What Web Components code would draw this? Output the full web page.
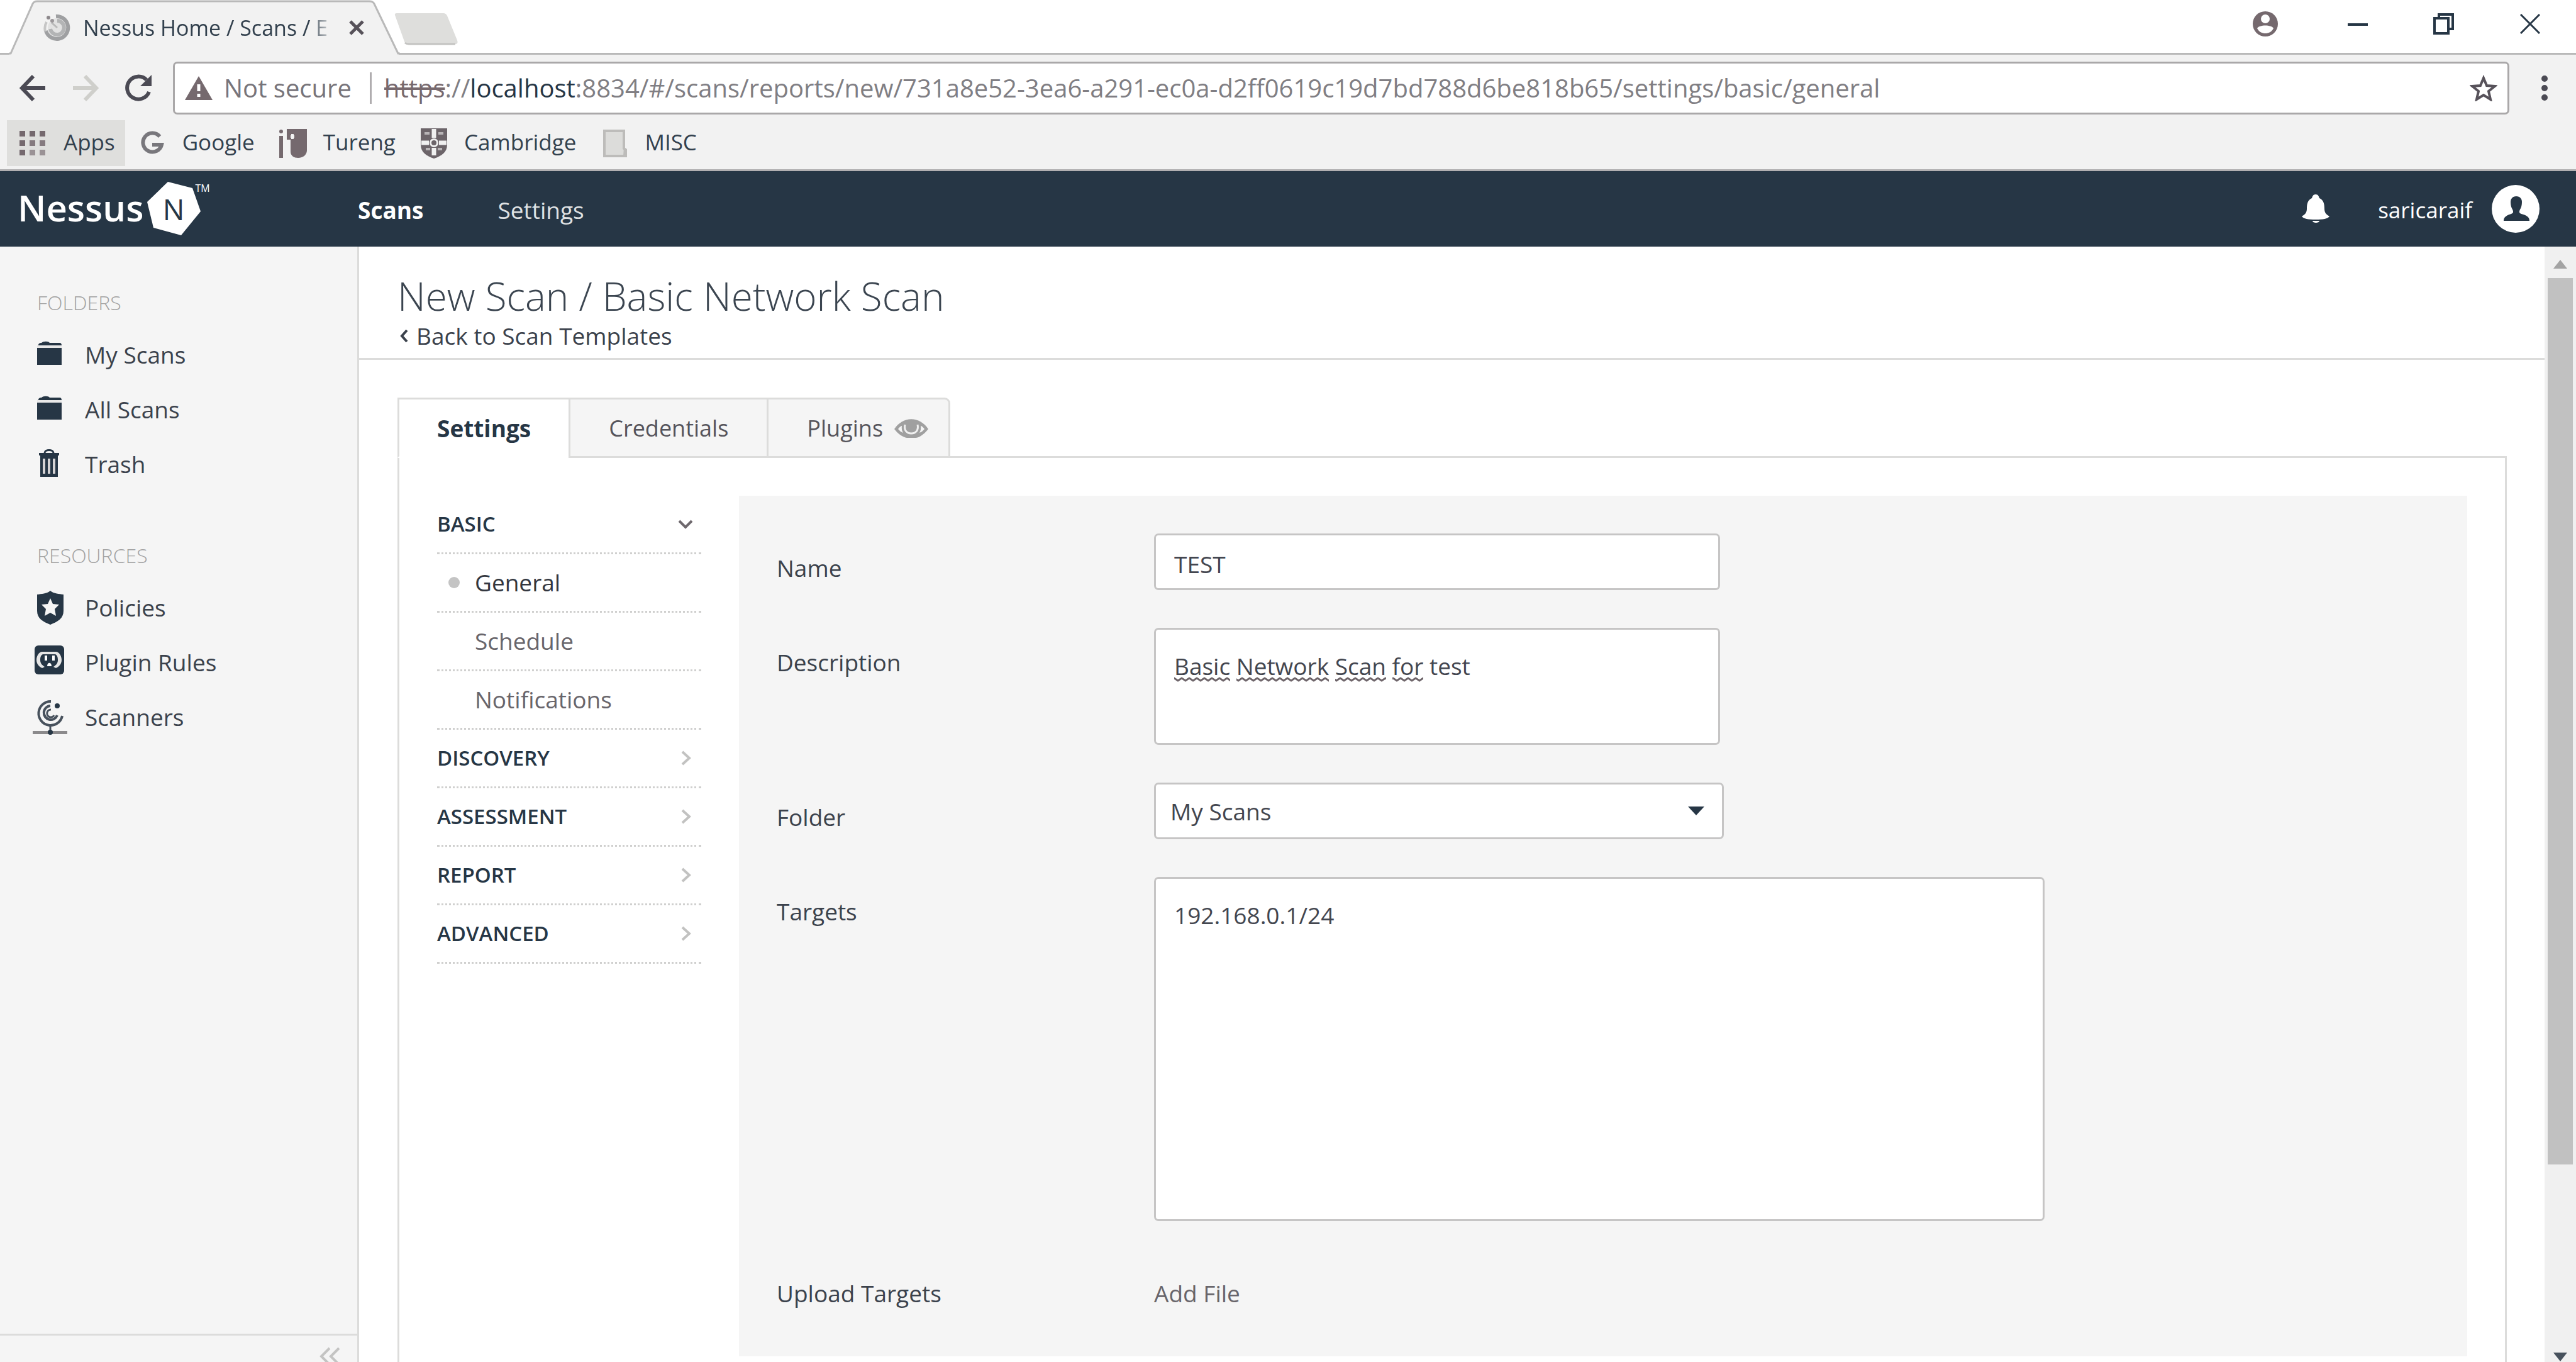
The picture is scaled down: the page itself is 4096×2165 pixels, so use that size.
<!DOCTYPE html>
<html lang="en">
<head>
<meta charset="utf-8">
<title>Nessus Home / Scans / Editor</title>
<style>
  :root {
    --ink: #263645;
    --text: #3b424c;
    --muted: #68656b;
    --line: #dcdcdb;
    --chrome: #f2f2f2;
    --panel: #f5f5f5;
  }
  html, body { margin: 0; height: 100%; overflow: hidden; background: #fff; }
  body { font: 37px/54px "Open Sans", "Noto Sans", sans-serif; color: var(--text); }
</style>
</head>
<body>
<nessus-window></nessus-window>

<script>
const RESET = `
  *, *::before, *::after { box-sizing: border-box; }
  button, input, textarea, select { font: inherit; color: inherit; margin: 0; }
  button { border: 0; background: none; padding: 0; cursor: pointer; }
  a { color: inherit; text-decoration: none; }
  svg { display: block; }
`;

function define(name, css, html) {
  customElements.define(name, class extends HTMLElement {
    constructor() {
      super();
      this.attachShadow({ mode: 'open' });
    }
    connectedCallback() {
      if (this.shadowRoot.childNodes.length) return;
      const markup = typeof html === 'function' ? html(this) : html;
      const tpl = document.createElement('template');
      tpl.innerHTML = `<style>${RESET}${css}</style>${markup}`;
      this.shadowRoot.append(tpl.content.cloneNode(true));
    }
  });
}

/* name: [width, height, drawing] */
const ICONS = {
  favicon: [44, 44, `
    <circle cx="23" cy="22" r="15" fill="#e2e2e2"/>
    <path d="M21 4A18 18 0 1 1 5 27" fill="none" stroke="#9fa0a2" stroke-width="6"/>
    <path d="M23 11a11 11 0 1 1-11 13" fill="none" stroke="#b3b4b5" stroke-width="6"/>
    <path d="M4 28Q2 20 6 13" fill="none" stroke="#c6c6c6" stroke-width="4"/>
    <path d="M14 14l9 8" stroke="#b9b9b9" stroke-width="3"/>
    <circle cx="9" cy="6" r="3" fill="#8d888b"/><circle cx="15" cy="11" r="3" fill="#9b979a"/>`],
  'tab-close': [26, 26, `<path d="M3 3l20 20M23 3L3 23" stroke="#57525a" stroke-width="5"/>`],
  back: [42, 44, `<path d="M41 22H5M22 3L4 22l18 19" fill="none" stroke="#4b4a54" stroke-width="6"/>`],
  forward: [42, 44, `<path d="M1 22h36M20 3l18 19-18 19" fill="none" stroke="#cfcfcb" stroke-width="6"/>`],
  reload: [44, 44, `<path d="M38 28A18 18 0 1 1 34 9" fill="none" stroke="#4b4a54" stroke-width="6"/><path d="M42 1v18H24z" fill="#4b4a54"/>`],
  warning: [44, 38, `<path d="M22 0l22 38H0z" fill="#75696e"/><path d="M22 13v11M22 28v5" stroke="#fff" stroke-width="5"/>`],
  star: [44, 42, `<path d="M22 5l5 12 13 1-10 8 3 13-11-7-11 7 3-13-10-8 13-1z" fill="none" stroke="#57525a" stroke-width="4"/>`],
  kebab: [12, 42, `<g fill="#4b4a54"><circle cx="6" cy="6" r="5"/><circle cx="6" cy="21" r="5"/><circle cx="6" cy="36" r="5"/></g>`],
  account: [42, 42, `<circle cx="21" cy="21" r="20" fill="#75696e"/><circle cx="21" cy="13" r="7" fill="#fff"/><path d="M8 28c3-6 23-6 26 0-3 6-8 8-13 8s-10-2-13-8z" fill="#fff"/>`],
  minimize: [32, 32, `<path d="M0 17h32" stroke="#263645" stroke-width="4"/>`],
  restore: [34, 34, `<path d="M2 8h22v24H2zM9 8V2h22v23h-6" fill="none" stroke="#263645" stroke-width="4"/>`],
  close: [32, 32, `<path d="M1 1l30 30M31 1L1 31" stroke="#263645" stroke-width="3"/>`],
  apps: [44, 44, `<g fill="#75696e"><path d="M0 2h9v9H0zM16 2h9v9h-9zM32 2h9v9h-9zM0 17h9v9H0zM0 32h9v9H0z"/><path d="M16 17h9v9h-9zM32 17h9v9h-9z" opacity=".85"/><path d="M16 32h9v9h-9zM32 32h9v9h-9z" opacity=".65"/></g>`],
  google: [44, 44, `<path d="M34 11A15 15 0 1 0 37 24H22" fill="none" stroke="#78777c" stroke-width="6"/>`],
  tureng: [44, 50, `<path d="M12 2h32v34c0 7-6 12-14 12-6 0-12-3-12-10V19h-6z" fill="#75696e"/><path d="M18 14h6M21 10v8" stroke="#f2f2f2" stroke-width="4"/><path d="M3 13v35" stroke="#75696e" stroke-width="6"/><circle cx="3" cy="6" r="3" fill="#75696e"/>`],
  cambridge: [44, 50, `<path d="M1 1h42v26c0 12-9 18-21 22C10 45 1 39 1 27z" fill="#6c6469"/><path d="M22 2v14M22 32v12M2 24h12M30 24h12" stroke="#f0f0f0" stroke-width="7"/><circle cx="22" cy="24" r="7" fill="#f0f0f0"/><circle cx="22" cy="24" r="4" fill="#6c6469"/><path d="M7 9h8M29 9h8M9 34h7M28 34h7" stroke="#b8b4b6" stroke-width="4"/>`],
  folder: [44, 44, `<path d="M6 2h31v28l3 2v10H6z" fill="#dcdcda" stroke="#bdbcba" stroke-width="4"/><path d="M37 28l4 4v10h-5z" fill="#bdbcba"/>`],
  hexagon: [86, 86, `<path d="M33 0l39 10 13 37-31 38-44-12L0 32z" fill="#fff"/><text x="42" y="61" text-anchor="middle" font-family="Open Sans, sans-serif" font-size="46" font-weight="500" fill="#263645">N</text>`],
  bell: [44, 46, `<path d="M22 0c4 0 5 3 6 6 7 3 8 10 8 17 0 6 3 9 8 12-3 4-10 5-22 5S3 39 0 35c5-3 8-6 8-12 0-7 1-14 8-17 1-3 2-6 6-6z" fill="#fff"/><path d="M17 42h11c0 4-11 4-11 0z" fill="#fff"/>`],
  avatar: [76, 76, `<circle cx="38" cy="38" r="38" fill="#fff"/><path d="M39 18c6 0 9 4 9 9s-1 9-3 12c-2 4-1 6 2 7 7 2 13 4 13 11H19c0-7 6-9 12-11 3-1 4-3 2-7-2-3-3-7-3-12s3-9 9-9z" fill="#263645"/>`],
  'side-folder': [56, 56, `<path d="M9 13c0-3 2-4 5-4 3-3 11-3 13 0h16c2 0 3 2 3 4H9zM7 17h39v27H7z" fill="#263645"/><path d="M7 15h39" stroke="#e8e8e8" stroke-width="4"/>`],
  'side-trash': [56, 56, `<path d="M10 10h32v4H10z" fill="#263645"/><path d="M19 10c0-6 14-6 14 0" fill="none" stroke="#263645" stroke-width="3"/><path d="M12 14h28v34H12z" fill="#263645"/><path d="M18 19v24M26 19v24M34 19v24" stroke="#d5d3d4" stroke-width="4"/>`],
  'side-shield': [56, 56, `<path d="M28 1c6 5 14 5 21 6v26c0 12-9 17-21 22C16 50 7 45 7 33V7c7-1 15-1 21-6z" fill="#263645"/><path d="M28 13l4 9 10 1-7 7 2 11-9-5-9 5 2-11-7-7 10-1z" fill="#f5f5f5"/>`],
  'side-plugin': [56, 56, `<rect x="3" y="1" width="47" height="46" rx="6" fill="#263645"/><path d="M15 11h22c5 0 9 7 9 13s-4 11-9 13l-4-2c4-3 7-5 7-11s-2-8-4-9H16c-2 1-4 3-4 9s3 8 7 11l-4 2c-5-2-9-7-9-13s4-13 9-13z" fill="#e6e6e6"/><path d="M19 17h4v8h-4zM31 17h4v8h-4zM23 34c0-7 7-7 7 0z" fill="#fff"/>`],
  'side-scanner': [56, 56, `<g fill="none" stroke="#47515c"><path d="M29 3a19 19 0 1 0 18 23" stroke-width="4"/><path d="M28 10a11 11 0 1 0 11 15" stroke-width="4"/><path d="M29 16a6 6 0 1 0 5 9" stroke-width="3"/><path d="M28 40v12" stroke-width="3"/></g><path d="M0 50h55v5H0z" fill="#8b8a8c"/><circle cx="28" cy="52" r="4" fill="#263645"/><circle cx="39" cy="10" r="4" fill="#263645"/>`],
  collapse: [34, 30, `<path d="M16 2L3 15l13 13M31 2L18 15l13 13" fill="none" stroke="#c4c4c3" stroke-width="4"/>`],
  'chevron-left': [30, 24, `<path d="M15 3L7 12l8 9" fill="none" stroke="#3b424c" stroke-width="4"/>`],
  'chevron-down': [24, 24, `<path d="M2 7l10 10L22 7" fill="none" stroke="#6e686d" stroke-width="4"/>`],
  'chevron-right': [24, 24, `<path d="M7 2l11 10L7 22" fill="none" stroke="#c2c2c1" stroke-width="4"/>`],
  eye: [54, 32, `<path d="M0 17C14 -4 40 -4 54 17 46 27 38 31 34 31H20C14 30 6 25 0 17z" fill="#a0a0a0"/><path d="M6 17q4-5 6-5-1 6 2 11-5-2-8-6zM48 17q-4-5-6-5 1 6-2 11 5-2 8-6z" fill="#f5f5f5"/><path d="M17 10c-2 9 3 14 10 14s12-5 10-14" fill="none" stroke="#f0f0f0" stroke-width="3"/>`],
  caret: [26, 14, `<path d="M0 0h26L13 14z" fill="#263645"/>`],
  'scroll-up': [22, 14, `<path d="M11 0l11 14H0z" fill="#a3a3a3"/>`],
  'scroll-down': [22, 14, `<path d="M0 0h22L11 14z" fill="#47515c"/>`]
};

define('ui-icon', `:host { display: block; flex: none; }`, el => {
  const [w, h, art] = ICONS[el.getAttribute('name')];
  return `<svg width="${w}" height="${h}" viewBox="0 0 ${w} ${h}" aria-hidden="true">${art}</svg>`;
});

/* ---------- browser frame ---------- */

define('browser-tabs', `
  :host { display: flex; height: 87px; background: linear-gradient(#b9b9b9, #b9b9b9) bottom / 100% 3px no-repeat #fff; padding-left: 14px; }
  .tab { display: grid; width: 622px; height: 87px; }
  .tab > * { grid-area: 1 / 1; }
  .body { display: flex; align-items: center; gap: 20px; padding: 0 56px 0 54px; }
  .title { flex: 1; font-size: 34px; color: #33414e; white-space: nowrap; overflow: hidden;
           -webkit-mask-image: linear-gradient(90deg, #000 360px, transparent 400px);
           mask-image: linear-gradient(90deg, #000 360px, transparent 400px); }
  .add { width: 104px; height: 52px; margin: 20px 0 0 -10px; }
  .controls { display: flex; margin-left: auto; padding-right: 5px; height: 76px; align-items: center; }
  .controls button { display: grid; place-items: center; width: 137px; height: 76px; }
  .controls .user { width: 44px; margin-right: 56px; }
`, `
  <div class="tab">
    <svg width="622" height="87" viewBox="0 0 622 87" aria-hidden="true">
      <path d="M0 87L3 85 38 6Q40 2 45 2H573Q579 2 581 6L620 85V87z" fill="#f2f2f2"/>
      <path d="M0 85H3L38 6Q40 2 45 2H573Q579 2 581 6L619 85H622" fill="none" stroke="#b9b9b9" stroke-width="3"/>
    </svg>
    <div class="body">
      <ui-icon name="favicon"></ui-icon>
      <span class="title">Nessus Home / Scans / E</span>
      <button aria-label="Close tab"><ui-icon name="tab-close"></ui-icon></button>
    </div>
  </div>
  <button class="add" aria-label="New tab">
    <svg width="104" height="52" viewBox="0 0 104 52"><path d="M2 4Q1 1 5 1H79Q83 1 85 5L101 44Q103 50 98 50H22Q18 50 17 46z" fill="#dededc"/><path d="M18 48Q20 50 24 50H98" stroke="#c3c3c1" stroke-width="3" fill="none"/></svg>
  </button>
  <div class="controls">
    <button class="user" aria-label="Account"><ui-icon name="account"></ui-icon></button>
    <button aria-label="Minimize"><ui-icon name="minimize"></ui-icon></button>
    <button aria-label="Restore"><ui-icon name="restore"></ui-icon></button>
    <button aria-label="Close"><ui-icon name="close"></ui-icon></button>
  </div>
`);

define('browser-toolbar', `
  :host { display: flex; align-items: center; padding: 11px 44px 9px 31px; background: var(--chrome); font-size: 40px; }
  .history { display: flex; gap: 42px; margin-right: 32px; }
  .box { flex: 1; min-width: 0; display: flex; align-items: center; height: 84px; padding: 0 16px; margin-right: 50px;
         border: 3px solid #aaa8a9; border-radius: 7px; background: #fff; white-space: nowrap; color: #77747a; }
  .state { margin: 0 29px 0 18px; }
  .sep { width: 3px; height: 50px; margin-right: 20px; background: #b0adaf; }
  .url { flex: 1; min-width: 0; overflow: hidden; outline: 0; color: #807e83; }
  .url s { color: #77696e; }
  .url b { font-weight: 400; color: #263645; }
`, `
  <div class="history">
    <button aria-label="Back"><ui-icon name="back"></ui-icon></button>
    <button aria-label="Forward" disabled><ui-icon name="forward"></ui-icon></button>
    <button aria-label="Reload"><ui-icon name="reload"></ui-icon></button>
  </div>
  <div class="box">
    <ui-icon name="warning"></ui-icon>
    <span class="state">Not secure</span>
    <span class="sep"></span>
    <div class="url" role="textbox" aria-label="Address" contenteditable="true" spellcheck="false"><s>https</s>://<b>localhost</b>:8834/#/scans/reports/new/731a8e52-3ea6-a291-ec0a-d2ff0619c19d7bd788d6be818b65/settings/basic/general</div>
    <button aria-label="Bookmark this page"><ui-icon name="star"></ui-icon></button>
  </div>
  <button aria-label="Menu"><ui-icon name="kebab"></ui-icon></button>
`);

define('bookmark-item', `
  :host { display: block; }
  a { display: flex; align-items: center; gap: 26px; height: 73px; font-size: 35px; line-height: 48px; color: #33414e; }
  span { padding-bottom: 3px; }
  .icon { width: 44px; }
  :host([filled]) a { padding: 0 16px 0 20px; margin-right: -18px; background: #dfdfdd; }
`, el => `<a href="#"><ui-icon class="icon" name="${el.getAttribute('icon')}"></ui-icon><span><slot></slot></span></a>`);

define('browser-bookmarks', `
  :host { display: flex; gap: 39px; padding: 0 11px 5px; background: var(--chrome); border-bottom: 3px solid #b1afb1; }
`, `
  <bookmark-item icon="apps" filled>Apps</bookmark-item>
  <bookmark-item icon="google">Google</bookmark-item>
  <bookmark-item icon="tureng">Tureng</bookmark-item>
  <bookmark-item icon="cambridge">Cambridge</bookmark-item>
  <bookmark-item icon="folder">MISC</bookmark-item>
`);

/* ---------- application ---------- */

define('nessus-header', `
  :host { display: flex; align-items: center; height: 120px; padding: 0 58px 0 28px; background: var(--ink); color: #fff; }
  .logo { display: flex; align-items: center; width: 541px; }
  .word { font-size: 58px; line-height: 80px; font-weight: 600; padding-bottom: 4px; margin-right: 6px; }
  .tm { align-self: flex-start; font-size: 16px; line-height: 20px; margin-left: -10px; }
  nav { display: flex; gap: 118px; padding-top: 4px; }
  nav a { color: #dfe1e3; }
  nav a[aria-current] { font-weight: 700; color: #fff; }
  .user { display: flex; align-items: center; margin-left: auto; font-size: 35px; }
  .name { margin: 0 31px 0 77px; padding-top: 4px; }
`, `
  <a class="logo" href="#"><span class="word">Nessus</span><ui-icon name="hexagon"></ui-icon><span class="tm">TM</span></a>
  <nav><a href="#" aria-current="page">Scans</a><a href="#">Settings</a></nav>
  <div class="user">
    <button aria-label="Notifications"><ui-icon name="bell"></ui-icon></button>
    <a class="name" href="#">saricaraif</a>
    <button aria-label="Profile"><ui-icon name="avatar"></ui-icon></button>
  </div>
`);

define('side-link', `
  :host { display: block; }
  a { display: flex; align-items: center; gap: 27px; height: 87px; }
`, el => `<a href="#"><ui-icon name="side-${el.getAttribute('icon')}"></ui-icon><span><slot></slot></span></a>`);

define('side-section', `
  :host { display: block; }
  h2 { margin: 0 0 17px; padding-left: 7px; font-size: 32px; line-height: 44px; font-weight: 300; color: #a3a3a3; }
`, el => `<h2>${el.getAttribute('heading')}</h2><slot></slot>`);

define('side-bar', `
  :host { display: flex; flex-direction: column; width: 571px; flex: none; background: var(--panel); border-right: 3px solid var(--line); }
  nav { flex: 1; display: flex; flex-direction: column; gap: 80px; padding: 67px 52px 0; }
  footer { display: flex; justify-content: flex-end; height: 45px; padding: 18px 26px 0 0; border-top: 3px solid var(--line); overflow: hidden; }
`, `
  <nav>
    <side-section heading="FOLDERS">
      <side-link icon="folder">My Scans</side-link>
      <side-link icon="folder">All Scans</side-link>
      <side-link icon="trash">Trash</side-link>
    </side-section>
    <side-section heading="RESOURCES">
      <side-link icon="shield">Policies</side-link>
      <side-link icon="plugin">Plugin Rules</side-link>
      <side-link icon="scanner">Scanners</side-link>
    </side-section>
  </nav>
  <footer><button aria-label="Collapse sidebar"><ui-icon name="collapse"></ui-icon></button></footer>
`);

define('page-heading', `
  :host { display: block; padding: 39px 61px 10px; border-bottom: 3px solid var(--line); }
  h1 { margin: 0; font-size: 62px; line-height: 78px; font-weight: 300; color: #3b4550; }
  a { display: flex; align-items: center; line-height: 50px; }
`, `
  <h1><slot></slot></h1>
  <a href="#"><ui-icon name="chevron-left"></ui-icon>Back to Scan Templates</a>
`);

define('scan-tabs', `
  :host { display: flex; }
  button { display: flex; align-items: center; gap: 18px; height: 96px; padding: 1px 61px 0; font-size: 36px;
           border: solid var(--line); border-width: 3px 0 3px 3px; background: var(--panel); color: #55545b; }
  button:first-child { border-top-left-radius: 9px; }
  button:last-of-type { border-right-width: 3px; border-top-right-radius: 9px; padding-right: 32px; }
  button[aria-selected=true] { padding: 1px 60px 0; font-size: 37px; font-weight: 700; color: var(--ink); background: #fff; border-bottom-color: transparent; }
  .rest { flex: 1; border-bottom: 3px solid var(--line); }
`, `
  <button role="tab" aria-selected="true">Settings</button>
  <button role="tab" aria-selected="false">Credentials</button>
  <button role="tab" aria-selected="false">Plugins<ui-icon name="eye"></ui-icon></button>
  <div class="rest"></div>
`);

define('settings-group', `
  :host { display: block; }
  button { display: flex; align-items: center; justify-content: space-between; width: 100%; height: 93px;
           padding-right: 13px; border-bottom: 3px dotted #d0d0cf; font-size: 33px; font-weight: 600; color: var(--ink); }
`, el => `
  <button aria-expanded="${el.hasAttribute('open')}">${el.getAttribute('heading')}<ui-icon name="chevron-${el.hasAttribute('open') ? 'down' : 'right'}"></ui-icon></button>
  <slot></slot>
`);

define('settings-item', `
  :host { display: block; }
  a { display: flex; align-items: center; height: 93px; border-bottom: 3px dotted #d0d0cf; color: var(--muted); }
  .dot { width: 18px; height: 18px; margin: 0 24px 0 18px; border-radius: 50%; }
  :host([active]) a { color: #33373f; }
  :host([active]) .dot { background: #c4c4c4; }
`, `<a href="#"><span class="dot"></span><span><slot></slot></span></a>`);

define('settings-nav', `:host { display: block; width: 420px; flex: none; }`, `
  <settings-group heading="BASIC" open>
    <settings-item active>General</settings-item>
    <settings-item>Schedule</settings-item>
    <settings-item>Notifications</settings-item>
  </settings-group>
  <settings-group heading="DISCOVERY"></settings-group>
  <settings-group heading="ASSESSMENT"></settings-group>
  <settings-group heading="REPORT"></settings-group>
  <settings-group heading="ADVANCED"></settings-group>
`);

define('form-row', `
  :host { display: grid; grid-template-columns: 600px 1fr; }
  .label { padding-top: 28px; }
`, `<div class="label"><slot name="label"></slot></div><div><slot></slot></div>`);

define('scan-form', `
  :host { display: block; flex: 1; min-width: 0; background: var(--panel); }
  form { display: flex; flex-direction: column; gap: 60px; padding: 60px; }
  input, textarea, select { display: block; max-width: 100%; border: 3px solid #c6c5c5; border-radius: 7px; background: #fff; color: #43464f; outline: 0; resize: none; overflow: hidden; }
  input { width: 900px; height: 90px; padding: 6px 29px 0; }
  textarea { padding: 31px 29px; }
  #description { width: 900px; height: 186px; }
  #targets { width: 1416px; height: 547px; }
  select { appearance: none; width: 906px; height: 90px; padding: 1px 23px 0; }
  .pick { display: grid; width: 906px; max-width: 100%; align-items: center; }
  .pick > * { grid-area: 1 / 1; }
  .pick ui-icon { justify-self: end; margin-right: 31px; pointer-events: none; }
  .checked { position: relative; }
  .checked svg { position: absolute; left: 32px; top: 78px; pointer-events: none; }
  button { padding: 28px 0 13px; color: var(--muted); }
`, `
  <form>
    <form-row>
      <label slot="label" for="name">Name</label>
      <input id="name" type="text" value="TEST">
    </form-row>
    <form-row>
      <label slot="label" for="description">Description</label>
      <div class="checked">
        <textarea id="description" spellcheck="false">Basic Network Scan for test</textarea>
        <svg width="400" height="8" viewBox="0 0 400 8" aria-hidden="true">
          <defs><pattern id="wave" width="12" height="8" patternUnits="userSpaceOnUse"><path d="M-3 2L0 2 6 6 12 2 15 2" fill="none" stroke="#6d6469" stroke-width="3"/></pattern></defs>
          <g fill="url(#wave)"><path d="M0 0h89v8H0zM99 0h147v8H99zM256 0h81v8h-81zM347 0h49v8h-49z"/></g>
        </svg>
      </div>
    </form-row>
    <form-row>
      <label slot="label" for="folder">Folder</label>
      <div class="pick">
        <select id="folder"><option>My Scans</option></select>
        <ui-icon name="caret"></ui-icon>
      </div>
    </form-row>
    <form-row>
      <label slot="label" for="targets">Targets</label>
      <textarea id="targets" spellcheck="false">192.168.0.1/24</textarea>
    </form-row>
    <form-row>
      <label slot="label" for="upload">Upload Targets</label>
      <button id="upload" type="button">Add File</button>
    </form-row>
  </form>
`);

define('page-scroll', `
  :host { display: flex; flex-direction: column; align-items: center; width: 50px; flex: none; background: #f0f0f0; }
  .up { margin: 21px 0 15px; }
  .track { flex: 1; width: 40px; }
  .thumb { height: 82.5%; background: #c1c1c1; }
  .down { padding-bottom: 1px; }
`, `
  <ui-icon class="up" name="scroll-up"></ui-icon>
  <div class="track"><div class="thumb"></div></div>
  <ui-icon class="down" name="scroll-down"></ui-icon>
`);

define('nessus-window', `
  :host { display: flex; flex-direction: column; height: 100vh; overflow: hidden; }
  .page { flex: 1; min-height: 0; display: flex; }
  main { flex: 1; min-width: 0; overflow: hidden; background: #fff; }
  .content { padding: 60px 60px 60px 61px; }
  .panel { display: flex; align-items: flex-start; gap: 60px; padding: 60px; border: solid var(--line); border-width: 0 3px 3px; }
`, `
  <browser-tabs></browser-tabs>
  <browser-toolbar></browser-toolbar>
  <browser-bookmarks></browser-bookmarks>
  <nessus-header></nessus-header>
  <div class="page">
    <side-bar></side-bar>
    <main>
      <page-heading>New Scan / Basic Network Scan</page-heading>
      <div class="content">
        <scan-tabs role="tablist"></scan-tabs>
        <div class="panel">
          <settings-nav></settings-nav>
          <scan-form></scan-form>
        </div>
      </div>
    </main>
    <page-scroll></page-scroll>
  </div>
`);
</script>
</body>
</html>
